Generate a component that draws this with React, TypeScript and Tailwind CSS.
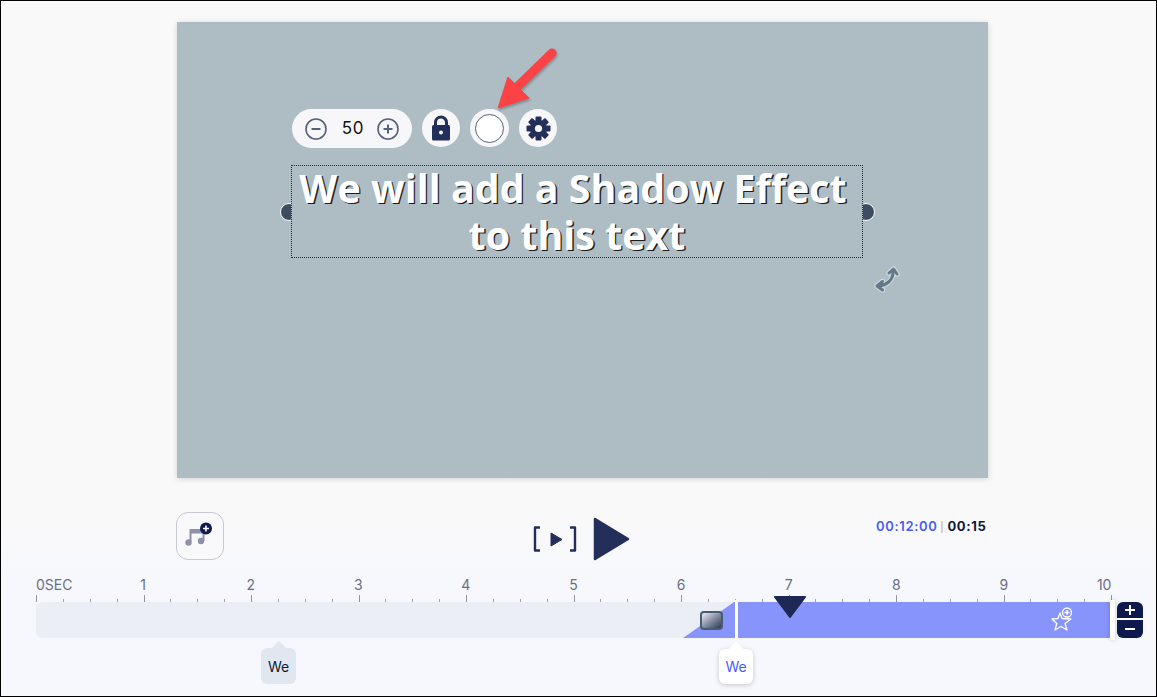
const labels = ["0SEC", "1", "2", "3", "4", "5", "6", "7", "8", "9", "10"]
const ticks = Array.from({ length: 41 }, (_, i) => i)
const gearTeeth = [0, 45, 90, 135]

function RedArrow() {
  return (
    <svg className="absolute left-[310px] top-[22px] drop-shadow-[1px_2px_1px_rgba(0,0,0,0.25)]" width="80" height="70" viewBox="0 0 80 70">
      <path d="M65 9 L28 45" stroke="#fb4346" strokeWidth="9" strokeLinecap="round" fill="none" />
      <path d="M11 64 L21 33 L42 54 Z" fill="#fb4346" stroke="#fb4346" strokeWidth="1" strokeLinejoin="round" />
    </svg>
  )
}

function Toolbar() {
  return (
    <div className="absolute left-[115px] top-[87px] flex gap-[10px]">
      <div className="flex h-[39px] w-[120px] items-center justify-between rounded-full bg-[#f7f7f9] px-[13px]">
        <svg width="22" height="22" viewBox="0 0 22 22" fill="none" stroke="#56627a" strokeWidth="1.6">
          <circle cx="11" cy="11" r="10" />
          <path d="M6.5 11h9" strokeWidth="2" />
        </svg>
        <span className="relative left-[1px] font-['Inter',sans-serif] text-[17px] font-normal tracking-[0.6px] text-[#111]">50</span>
        <svg width="22" height="22" viewBox="0 0 22 22" fill="none" stroke="#56627a" strokeWidth="1.6">
          <circle cx="11" cy="11" r="10" />
          <path d="M6.5 11h9M11 6.5v9" strokeWidth="2" />
        </svg>
      </div>
      <div className="flex h-[38px] w-[38px] items-center justify-center rounded-full bg-[#f7f7f9]">
        <svg width="20" height="26" viewBox="0 0 20 26">
          <path d="M4.5 11V7.5a5.5 5.5 0 0 1 11 0V11" fill="none" stroke="#232f5a" strokeWidth="3" />
          <rect x="1" y="10" width="18" height="15.5" rx="1.5" fill="#232f5a" />
          <circle cx="10" cy="17.5" r="2" fill="#f7f7f9" />
        </svg>
      </div>
      <div className="flex h-[38px] w-[39px] items-center justify-center rounded-full bg-[#f7f7f9]">
        <div className="h-[29px] w-[29px] rounded-full border border-[#56627a] bg-white" />
      </div>
      <div className="flex h-[38px] w-[38px] items-center justify-center rounded-full bg-[#f7f7f9]">
        <svg width="25" height="25" viewBox="0 0 25 25">
          {gearTeeth.map((angle) => (
            <rect key={angle} x="9.5" y="0.5" width="6" height="24" rx="1" fill="#232f5a" transform={`rotate(${angle} 12.5 12.5)`} />
          ))}
          <circle cx="12.5" cy="12.5" r="8.5" fill="#232f5a" />
          <circle cx="12.5" cy="12.5" r="3.6" fill="#f7f7f9" />
        </svg>
      </div>
    </div>
  )
}

function TextBox() {
  return (
    <div className="absolute left-[114px] top-[143px] h-[93px] w-[572px]">
      <div className="absolute left-[-11px] top-[38px] h-[18px] w-[18px] rounded-full border border-white bg-[#3d4c60]" />
      <div className="absolute right-[-12px] top-[38px] h-[18px] w-[18px] rounded-full border border-white bg-[#3d4c60]" />
      <div className="relative flex h-full w-full flex-col items-center justify-center border border-dotted border-[#1f2a3a] bg-[#aebcc3] font-['Open_Sans',sans-serif] text-[39.4px] leading-[47px] font-bold whitespace-nowrap text-white [text-shadow:1.4px_1.4px_0_#1c1c1c]">
        <div className="pr-[8px]">We will add a Shadow Effect</div>
        <div>to this text</div>
      </div>
    </div>
  )
}

function RotateHandle() {
  return (
    <svg className="absolute left-[696px] top-[244px]" width="28" height="28" viewBox="0 0 28 28" fill="none" strokeLinecap="round" strokeLinejoin="round">
      <path d="M20 6 C20 14 14 19 6 20 M16 7 L20.5 3 L24 8 M9.5 15.5 L4 20 L9.5 24" stroke="#cdd6db" strokeWidth="5.5" />
      <path d="M20 6 C20 14 14 19 6 20 M16 7 L20.5 3 L24 8 M9.5 15.5 L4 20 L9.5 24" stroke="#62788a" strokeWidth="3" />
    </svg>
  )
}

function MusicButton() {
  return (
    <div className="flex h-[48px] w-[48px] items-center justify-center rounded-xl border border-[#c8cad6] bg-[#f9f9fb]">
      <svg width="30" height="28" viewBox="0 0 30 28">
        <path d="M5.5 20V8h13v11" fill="none" stroke="#8e91a8" strokeWidth="2" />
        <path d="M5 7.5h14v4H5z" fill="#8e91a8" />
        <circle cx="3.5" cy="20.5" r="3.2" fill="#8e91a8" />
        <circle cx="16" cy="19" r="3.2" fill="#8e91a8" />
        <circle cx="21" cy="6.5" r="6" fill="#101a4e" />
        <path d="M21 3.5v6M18 6.5h6" stroke="#fff" strokeWidth="1.6" />
      </svg>
    </div>
  )
}

function Controls() {
  return (
    <div className="mt-[34px] flex h-[48px]">
      <div className="ml-[175px]">
        <MusicButton />
      </div>
      <svg className="ml-[309px] mt-[14px]" width="44" height="26" viewBox="0 0 44 26" fill="none">
        <path d="M7 1.5H2v23h5M37 1.5h5v23h-5" stroke="#232f5a" strokeWidth="2.4" strokeLinejoin="round" />
        <path d="M18 7l11 6.5-11 6.5z" fill="#232f5a" stroke="#232f5a" strokeWidth="1" strokeLinejoin="round" />
      </svg>
      <svg className="ml-[16px] mt-[5px]" width="37" height="44" viewBox="0 0 37 44">
        <path d="M2 2 L35 22 L2 42 Z" fill="#232f5a" stroke="#232f5a" strokeWidth="2.5" strokeLinejoin="round" />
      </svg>
      <div className="ml-[246px] mt-[6px] flex h-[17px] items-center font-['Inter',sans-serif] text-[13px] font-semibold tracking-[0.65px]">
        <span className="text-[#4a5cf5]">00:12:00</span>
        <span className="mx-[4px] h-[12px] w-[2px] bg-[#cfd1d8]" />
        <span className="font-bold text-[#111a35]">00:15</span>
      </div>
    </div>
  )
}

function Ruler() {
  return (
    <div className="ml-[35px] mt-[14px] w-[1076px]">
      <div className="flex h-[20px] items-center justify-between font-['Inter',sans-serif] text-[14px] text-[#6a6f87]">
        {labels.map((label, i) => (
          <div key={label} className={i === 0 ? "flex w-0 justify-start" : i === 10 ? "flex w-0 justify-end" : "flex w-0 justify-center"}>
            <span className={i === 0 ? "" : "relative left-[-0.5px]"}>{label}</span>
          </div>
        ))}
      </div>
      <div className="flex h-[8px] items-end justify-between">
        {ticks.map((i) => (
          <div key={i} className={i % 4 === 0 ? "h-[7px] w-px bg-[#8f93a3]" : "h-[3px] w-px bg-[#a3a6b4]"} />
        ))}
      </div>
    </div>
  )
}

function Track() {
  return (
    <div className="relative ml-[35px] flex h-[36px]">
      <div className="relative h-full w-[701px] rounded-l-md bg-[#eceef6]">
        <svg className="absolute left-[647px] top-0" width="54" height="36" viewBox="0 0 54 36">
          <path d="M0 36 L54 -2 V36 Z" fill="#8694fc" />
        </svg>
        <div className="absolute left-[664px] top-[9px] h-[19px] w-[23px] rounded-[4px] border-2 border-[#4b5a70] bg-gradient-to-br from-[#eef0f8] to-[#2f3a55]" />
      </div>
      <div className="relative h-full w-[373px] bg-[#8694fc]">
        <svg className="absolute left-[36px] top-[-7px]" width="34" height="23" viewBox="0 0 34 23">
          <path d="M2 2 H32 L17 22 Z" fill="#1d2856" stroke="#1d2856" strokeWidth="2" strokeLinejoin="round" />
        </svg>
        <svg className="absolute left-[314px] top-[5px]" width="24" height="24" viewBox="0 0 24 24" fill="none" stroke="#fff" strokeWidth="1.3" strokeLinejoin="round">
          <path d="M9 6 L11 11.5 L20 12 L14 16.5 L16 23 L10 19.5 L4 23 L5.8 16.5 L1 12 L7 11.5 Z" />
          <circle cx="16" cy="5.5" r="4.5" fill="#8694fc" />
          <path d="M16 3v5M13.5 5.5h5" strokeWidth="1.4" />
        </svg>
      </div>
      <div className="absolute left-[699px] top-[-2px] h-[40px] w-[3px] bg-white" />
      <div className="absolute left-[1074px] top-[-2px] h-[40px] w-[5px] bg-white shadow-[0_0_4px_rgba(0,0,0,0.2)]" />
      <div className="ml-[7px] flex h-[36px] w-[26px] flex-col overflow-hidden rounded-md bg-[#0e1a4d] text-white">
        <div className="flex h-[18px] items-center justify-center border-b-2 border-white">
          <svg width="12" height="12" viewBox="0 0 12 12"><path d="M6 1v10M1 6h10" stroke="#fff" strokeWidth="2" /></svg>
        </div>
        <div className="flex h-[18px] items-center justify-center">
          <svg width="12" height="12" viewBox="0 0 12 12"><path d="M1 6h10" stroke="#fff" strokeWidth="2" /></svg>
        </div>
      </div>
    </div>
  )
}

function Bubble({ className, box, text }: { className: string; box: string; text: string }) {
  return (
    <div className={className}>
      <div className={`absolute left-1/2 top-[-5px] h-[11px] w-[11px] -translate-x-1/2 rotate-45 ${box}`} />
      <span className="relative font-['Inter',sans-serif] text-[14px]">{text}</span>
    </div>
  )
}

export default function App() {
  return (
    <div className="relative h-[697px] w-[1157px] overflow-hidden border border-black bg-gradient-to-b from-[#f9f9fa] from-75% to-[#f6f8fd] to-85%">
      <div className="relative ml-[176px] mt-[21px] h-[456px] w-[811px] bg-[#aebcc3] shadow-[0_1px_6px_rgba(0,0,0,0.15)]">
        <TextBox />
        <Toolbar />
        <RotateHandle />
        <RedArrow />
      </div>
      <Controls />
      <Ruler />
      <Track />
      <Bubble
        className="absolute left-[260px] top-[647px] flex h-[36px] w-[35px] items-center justify-center rounded-md bg-[#e1e7f0] text-[#111a35]"
        box="bg-[#e1e7f0]"
        text="We"
      />
      <Bubble
        className="absolute left-[718px] top-[648px] flex h-[35px] w-[34px] items-center justify-center rounded-md bg-white text-[#4a5cf5] shadow-[0_1px_5px_rgba(0,0,0,0.2)]"
        box="bg-white"
        text="We"
      />
    </div>
  )
}
